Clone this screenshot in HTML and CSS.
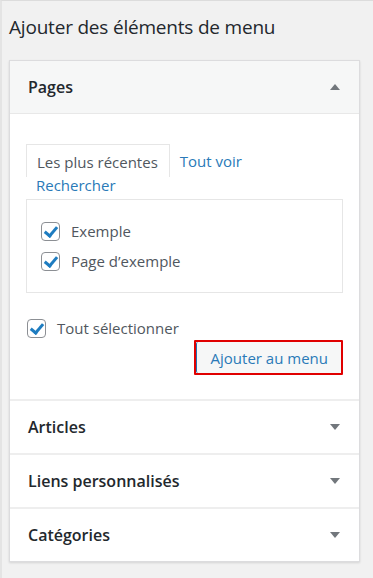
FILE: index.html
```html
<!DOCTYPE html>
<html lang="fr">
<head>
    <meta charset="UTF-8">
    <meta name="viewport" content="width=device-width, initial-scale=1.0">
    <title>Ajouter des éléments de menu</title>
    <link rel="stylesheet" href="styles.css">
</head>
<body>
    <div class="screen">
        <h2 class="title">Ajouter des éléments de menu</h2>

        <div class="accordion">
            <div class="section open">
                <div class="section-head">
                    <span>Pages</span>
                    <span class="arrow up"></span>
                </div>
                <div class="section-body">
                    <div class="tabs">
                        <span class="tab active">Les plus récentes</span>
                        <a class="tab" href="#">Tout voir</a>
                        <a class="tab" href="#">Rechercher</a>
                    </div>
                    <div class="tab-panel">
                        <label class="check-row">
                            <span class="box checked"></span>
                            Exemple
                        </label>
                        <label class="check-row">
                            <span class="box checked"></span>
                            Page d’exemple
                        </label>
                    </div>
                    <label class="check-row select-all">
                        <span class="box checked"></span>
                        Tout sélectionner
                    </label>
                    <div class="actions">
                        <div class="highlight">
                            <button class="add-button">Ajouter au menu</button>
                        </div>
                    </div>
                </div>
            </div>
            <div class="section">
                <div class="section-head">
                    <span>Articles</span>
                    <span class="arrow"></span>
                </div>
            </div>
            <div class="section">
                <div class="section-head">
                    <span>Liens personnalisés</span>
                    <span class="arrow"></span>
                </div>
            </div>
            <div class="section">
                <div class="section-head">
                    <span>Catégories</span>
                    <span class="arrow"></span>
                </div>
            </div>
        </div>
    </div>
</body>
</html>
```

FILE: styles.css
```css
body {
    margin: 0;
    background-color: #f1f1f1;
    font-family: 'Open Sans', 'Noto Sans', sans-serif;
    color: #23282d;
}

.screen {
    height: 577px;
    border-top: 1px solid #dcdcdc;
    border-left: 2px solid #e4e4e4;
    padding-left: 7px;
}

.title {
    margin: 0;
    padding-top: 13px;
    height: 46px;
    font-size: 19px;
    font-weight: 400;
    line-height: 26px;
    letter-spacing: -0.2px;
}

.accordion {
    width: 349px;
    border: 1px solid #dcdcde;
    background-color: #ffffff;
    box-shadow: 0 1px 2px rgba(0, 0, 0, 0.12);
}

.section {
    border-top: 2px solid #eeeeee;
}

.section:first-child {
    border-top: none;
}

.section-head {
    display: flex;
    justify-content: space-between;
    align-items: center;
    height: 52px;
    padding: 0 18px 0 18px;
    font-size: 16px;
    font-weight: 600;
}

.section.open .section-head {
    background-color: #f6f7f7;
    border-bottom: 1px solid #e8e8e8;
}

.arrow {
    width: 0;
    height: 0;
    border-left: 5px solid transparent;
    border-right: 5px solid transparent;
    border-top: 6px solid #72777c;
    margin-right: 1px;
}

.arrow.up {
    border-top: none;
    border-bottom: 6px solid #72777c;
}

.section-body {
    padding: 30px 16px 24px 16px;
}

.tabs {
    display: flex;
    flex-wrap: wrap;
    font-size: 15px;
    line-height: 21px;
}

.tab {
    color: #2a7ab8;
    text-decoration: none;
    padding: 7px 10px 3px 10px;
}

.tab.active {
    color: #50575e;
    border: 1px solid #e6e6e6;
    border-bottom: none;
    padding: 7px 11px 4px 10px;
    background-color: #ffffff;
}

.tabs .tab:last-child {
    margin-top: -2px;
    padding-top: 0;
    padding-bottom: 3px;
}

.tab-panel {
    display: flex;
    flex-direction: column;
    gap: 10px;
    border: 1px solid #e6e6e6;
    padding: 21px 14px 21px 14px;
}

.check-row {
    display: flex;
    align-items: center;
    gap: 11px;
    font-size: 15px;
    color: #50575e;
    line-height: 20px;
}

.box {
    position: relative;
    width: 19px;
    height: 19px;
    border: 1px solid #8c8f94;
    border-radius: 4px;
    box-sizing: border-box;
    flex-shrink: 0;
}

.box.checked::after {
    content: '';
    position: absolute;
    left: 5px;
    top: 1px;
    width: 5px;
    height: 10px;
    border-right: 3px solid #1e7cc0;
    border-bottom: 3px solid #1e7cc0;
    transform: rotate(40deg);
}

.select-all {
    margin-top: 25px;
    margin-left: 1px;
}

.actions {
    display: flex;
    justify-content: flex-end;
    margin-top: 2px;
}

.highlight {
    border: 2px solid #e00000;
    border-radius: 1px;
}

.add-button {
    display: block;
    height: 31px;
    padding: 0 13px 0 14px;
    background-color: #f6f7f7;
    border: none;
    border-left: 1px solid #2271b1;
    border-radius: 2px;
    color: #2a7ab8;
    font-family: 'Open Sans', 'Noto Sans', sans-serif;
    font-size: 15px;
}
```
